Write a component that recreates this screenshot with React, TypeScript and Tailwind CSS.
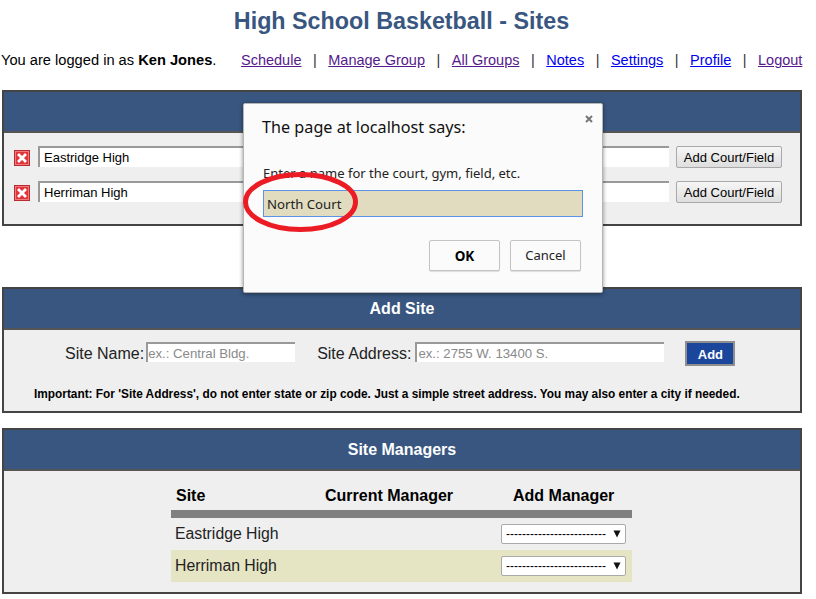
const arial = "font-['Liberation_Sans',Arial,sans-serif]";
const segoe = "font-['Noto_Sans',sans-serif]";

function DeleteIcon() {
  return (
    <svg width="16" height="16" viewBox="0 0 16 16" className="shrink-0">
      <rect x="0.5" y="0.5" width="15" height="15" fill="#e0353b" stroke="#bb2a30" />
      <rect x="1.5" y="1.5" width="13" height="13" fill="none" stroke="#ef7a7e" />
      <path d="M5 5l6 6M11 5l-6 6" stroke="#fff" strokeWidth="2.8" strokeLinecap="square" />
    </svg>
  );
}

function SiteRow({ name }: { name: string }) {
  return (
    <div className="flex h-[22px] items-center">
      <div className="ml-[10px] mt-[2px]">
        <DeleteIcon />
      </div>
      <div className="ml-[8px] h-[21px] w-[631px] self-start border-l-2 border-t-2 border-[#999] bg-white pl-[4px] text-[13px] leading-[19px] text-black">
        {name}
      </div>
      <button className="ml-[7px] h-[22px] w-[106px] rounded-[2px] border border-[#a9a9a9] bg-gradient-to-b from-[#f6f6f6] to-[#dedede] pt-[1px] text-[13px] leading-[18px] text-black">
        Add Court/Field
      </button>
    </div>
  );
}

function Panel({ title, className, children }: { title?: string; className: string; children: React.ReactNode }) {
  return (
    <section className={`mx-[2px] w-[800px] border-2 border-[#444] bg-[#efefef] ${className}`}>
      <h2 className="h-[41px] border-b-2 border-[#555] bg-[#385680] text-center text-[16px] font-bold leading-[40px] text-white">
        {title}
      </h2>
      {children}
    </section>
  );
}

function NavLink({ label, visited }: { label: string; visited?: boolean }) {
  return <a className={`underline ${visited ? "text-[#551a8b]" : "text-[#0000ee]"}`}>{label}</a>;
}

function ManagerSelect() {
  return (
    <div className="flex h-[20px] w-[125px] items-center justify-between rounded-[2px] border border-[#a9a9a9] bg-white pl-[4px] pr-[4px] text-[12px] text-black">
      <span className="leading-none">-------------------------</span>
      <svg width="8" height="8" viewBox="0 0 8 8">
        <path d="M0.5 0.5h7L4 7.5z" fill="#111" />
      </svg>
    </div>
  );
}

export default function App() {
  return (
    <div className={`relative h-[599px] w-[816px] overflow-hidden bg-white ${arial}`}>
      <h1 className="h-[50px] pr-[13px] pt-[5px] text-center text-[23.3px] font-bold leading-[32px] text-[#385680]">
        High School Basketball - Sites
      </h1>

      <div className="flex h-[40px] items-start pl-[1px] pt-[1px] text-[14.67px] leading-[18px] text-black">
        <span className="w-[240px] whitespace-nowrap">
          You are logged in as <b>Ken Jones</b>.
        </span>
        <nav className="flex gap-[11.5px] whitespace-nowrap text-[14.5px]">
          <NavLink label="Schedule" visited />
          <span className="text-[#333]">|</span>
          <NavLink label="Manage Group" visited />
          <span className="text-[#333]">|</span>
          <NavLink label="All Groups" visited />
          <span className="text-[#333]">|</span>
          <NavLink label="Notes" />
          <span className="text-[#333]">|</span>
          <NavLink label="Settings" />
          <span className="text-[#333]">|</span>
          <NavLink label="Profile" />
          <span className="text-[#333]">|</span>
          <NavLink label="Logout" visited />
        </nav>
      </div>

      <Panel className="h-[136px]">
        <div className="flex flex-col gap-[13px] pt-[13px]">
          <SiteRow name="Eastridge High" />
          <SiteRow name="Herriman High" />
        </div>
      </Panel>

      <Panel title="Add Site" className="mt-[61px] h-[126px]">
        <div className="flex h-[46px] items-start pl-[61px] pt-[12px] text-[16px] leading-[24px] text-[#222]">
          <span>Site Name:</span>
          <div className="ml-[2px] h-[20px] w-[149px] border-l-2 border-t-2 border-[#999] bg-white text-[13.2px] leading-[20px] text-[#8a8a8a]">
            ex.: Central Bldg.
          </div>
          <span className="ml-[22px]">Site Address:</span>
          <div className="ml-[4px] h-[20px] w-[249px] border-l-2 border-t-2 border-[#999] bg-white pl-[1px] text-[13.2px] leading-[20px] text-[#8a8a8a]">
            ex.: 2755 W. 13400 S.
          </div>
          <button className="ml-[21px] -mt-[1px] h-[25px] w-[50px] border-2 border-[#8e8e8e] bg-[#1a469c] pt-[2px] text-[13px] font-bold leading-[20px] text-white">
            Add
          </button>
        </div>
        <p className="pl-[30px] pt-[10px] text-[11.85px] font-bold leading-[16px] text-black">
          Important: For 'Site Address', do not enter state or zip code. Just a simple street address. You may also enter a city if needed.
        </p>
      </Panel>

      <Panel title="Site Managers" className="mt-[15px] h-[166px]">
        <div className="ml-[167px] w-[461px] pt-[14px]">
          <div className="flex h-[33px] border-b-[8px] border-[#808080] text-[16px] font-bold leading-[22px] text-black">
            <span className="w-[149px] pl-[5px]">Site</span>
            <span className="w-[170px] whitespace-nowrap pl-[5px]">Current Manager</span>
            <span className="whitespace-nowrap pl-[23px]">Add Manager</span>
          </div>
          <div className="flex h-[32px] items-center justify-between pl-[4px] pr-[6px] text-[15.8px] text-[#222]">
            <span>Eastridge High</span>
            <ManagerSelect />
          </div>
          <div className="flex h-[32px] items-center justify-between bg-[#e5e5c4] pl-[4px] pr-[6px] text-[15.8px] text-[#222]">
            <span>Herriman High</span>
            <ManagerSelect />
          </div>
        </div>
      </Panel>

      {/* prompt dialog */}
      <div className={`absolute left-[243px] top-[103px] h-[190px] w-[360px] rounded-[2px] border border-[#b5b5b5] bg-[#fbfbfb] shadow-[0_1px_4px_rgba(0,0,0,0.45)] ${segoe}`}>
        <svg width="8" height="8" viewBox="0 0 8 8" className="absolute left-[341px] top-[11px]">
          <path d="M1 1l6 6M7 1l-6 6" stroke="#777" strokeWidth="2" />
        </svg>
        <p className="pl-[18px] pt-[12px] text-[16.2px] leading-[22px] text-[#111]">The page at localhost says:</p>
        <p className="pl-[19px] pt-[26px] text-[13px] leading-[18px] text-[#222]">Enter a name for the court, gym, field, etc.</p>
        <div className="ml-[19px] mt-[8px] h-[27px] w-[320px] border border-[#5b93e8] bg-[#e1dcbf] pl-[3px] text-[13.2px] leading-[27px] text-[#222]">
          North Court
        </div>
        <div className="flex justify-end gap-[10px] pr-[21px] pt-[23px]">
          <button className="h-[31px] w-[71px] rounded-[2px] border border-[#c4c4c4] bg-[#fbfbfb] pt-[1px] text-[13.5px] font-bold text-black shadow-[0_1px_1px_rgba(0,0,0,0.12)]">
            OK
          </button>
          <button className="h-[31px] w-[71px] rounded-[2px] border border-[#c4c4c4] bg-[#fbfbfb] pt-[1px] text-[13px] text-[#222] shadow-[0_1px_1px_rgba(0,0,0,0.12)]">
            Cancel
          </button>
        </div>
      </div>

      {/* red marker circled around the input */}
      <svg width="118" height="62" viewBox="0 0 118 62" className="absolute left-[242px] top-[171px]">
        <ellipse cx="58.5" cy="31" rx="55" ry="27.5" fill="none" stroke="#ec1c24" strokeWidth="5" />
      </svg>
    </div>
  );
}
